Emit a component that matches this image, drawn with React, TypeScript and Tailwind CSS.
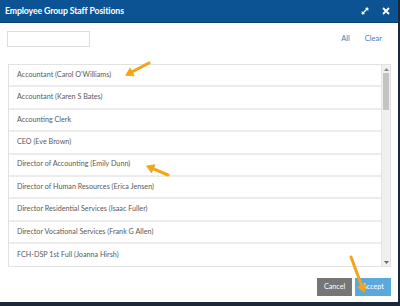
const positions = [
  "Accountant (Carol O'Williams)",
  'Accountant (Karen S Bates)',
  'Accounting Clerk',
  'CEO (Eve Brown)',
  'Director of Accounting (Emily Dunn)',
  'Director of Human Resources (Erica Jensen)',
  'Director Residential Services (Isaac Fuller)',
  'Director Vocational Services (Frank G Allen)',
  'FCH-DSP 1st Full (Joanna Hirsh)',
];

const Arrow = ({ x1, y1, x2, y2 }: { x1: number; y1: number; x2: number; y2: number }) => {
  const a = Math.atan2(y2 - y1, x2 - x1);
  const h = 8;
  const p1 = [x2 - h * Math.cos(a - 0.55), y2 - h * Math.sin(a - 0.55)];
  const p2 = [x2 - h * Math.cos(a + 0.55), y2 - h * Math.sin(a + 0.55)];
  return (
    <g stroke="#f2a51a" strokeWidth="3" strokeLinecap="round" fill="#f2a51a">
      <line x1={x1} y1={y1} x2={x2 - 4 * Math.cos(a)} y2={y2 - 4 * Math.sin(a)} />
      <polygon points={`${x2},${y2} ${p1[0]},${p1[1]} ${p2[0]},${p2[1]}`} strokeWidth="1" strokeLinejoin="round" />
    </g>
  );
};

const App = () => {
  return (
    <div className="relative w-[400px] h-[306px] bg-[#1c2838] overflow-hidden font-['Lato',sans-serif]">
      <div className="w-[398px] h-[302px] bg-white flex flex-col">
        {/* Header */}
        <div className="h-[23px] bg-[#0c5393] border-b border-[#0a3f70] flex items-center justify-between pl-[5px] pr-[8px]">
          <span className="text-white font-bold text-[8.7px] tracking-[-0.1px]">Employee Group Staff Positions</span>
          <div className="flex items-center gap-[13px]">
            <svg width="8" height="8" viewBox="0 0 8 8">
              <path d="M1 7 L7 1" stroke="white" strokeWidth="1.3" />
              <path d="M4.5 1 H7 V3.5 Z" fill="white" stroke="white" strokeWidth="0.6" />
              <path d="M1 4.5 V7 H3.5 Z" fill="white" stroke="white" strokeWidth="0.6" />
            </svg>
            <svg width="8" height="8" viewBox="0 0 8 8">
              <path d="M1 1 L7 7 M7 1 L1 7" stroke="white" strokeWidth="1.8" />
            </svg>
          </div>
        </div>

        {/* Search row */}
        <div className="flex items-center justify-between pl-[7px] pr-[16px] pt-[8px]">
          <div className="w-[83px] h-[16px] border border-[#dedede] bg-white" />
          <div className="flex gap-[15px] text-[7.5px] text-[#3f7fc0]">
            <span>All</span>
            <span>Clear</span>
          </div>
        </div>

        {/* List */}
        <div className="mt-[17px] ml-[8px] mr-[7px] h-[203px] border border-[#e2e2e2] flex overflow-hidden">
          <div className="flex-1 flex flex-col">
            {positions.map((p, i) => (
              <div
                key={p}
                className={`h-[22.4px] shrink-0 flex items-center pl-[8px] text-[7.2px] text-[#5a5a5a] ${
                  i < positions.length - 1 ? 'border-b-2 border-[#ececec]' : ''
                }`}
              >
                {p}
              </div>
            ))}
          </div>
          <div className="w-[9px] bg-[#f0f0f0] border-l border-[#e4e4e4] flex flex-col items-center">
            <div className="h-[8px] flex items-center">
              <svg width="5" height="3" viewBox="0 0 5 3">
                <path d="M2.5 0 L5 3 H0 Z" fill="#888" />
              </svg>
            </div>
            <div className="w-[6px] h-[37px] bg-[#c3c3c3]" />
            <div className="flex-1" />
            <div className="h-[8px] flex items-center">
              <svg width="5" height="3" viewBox="0 0 5 3">
                <path d="M0 0 H5 L2.5 3 Z" fill="#666" />
              </svg>
            </div>
          </div>
        </div>

        {/* Footer */}
        <div className="flex justify-end gap-[3px] pr-[7px] mt-[11px]">
          <button className="w-[35px] h-[18px] bg-[#767676] text-white text-[7.2px]">Cancel</button>
          <button className="w-[36px] h-[18px] bg-[#5aa8dc] text-white text-[7.2px]">Accept</button>
        </div>
      </div>

      {/* Annotation arrows */}
      <svg className="absolute inset-0 pointer-events-none" width="400" height="306">
        <Arrow x1={149} y1={63} x2={126} y2={75} />
        <Arrow x1={168} y1={175} x2={147} y2={166} />
        <Arrow x1={351} y1={257} x2={364} y2={292} />
      </svg>
    </div>
  );
};

export default App;
